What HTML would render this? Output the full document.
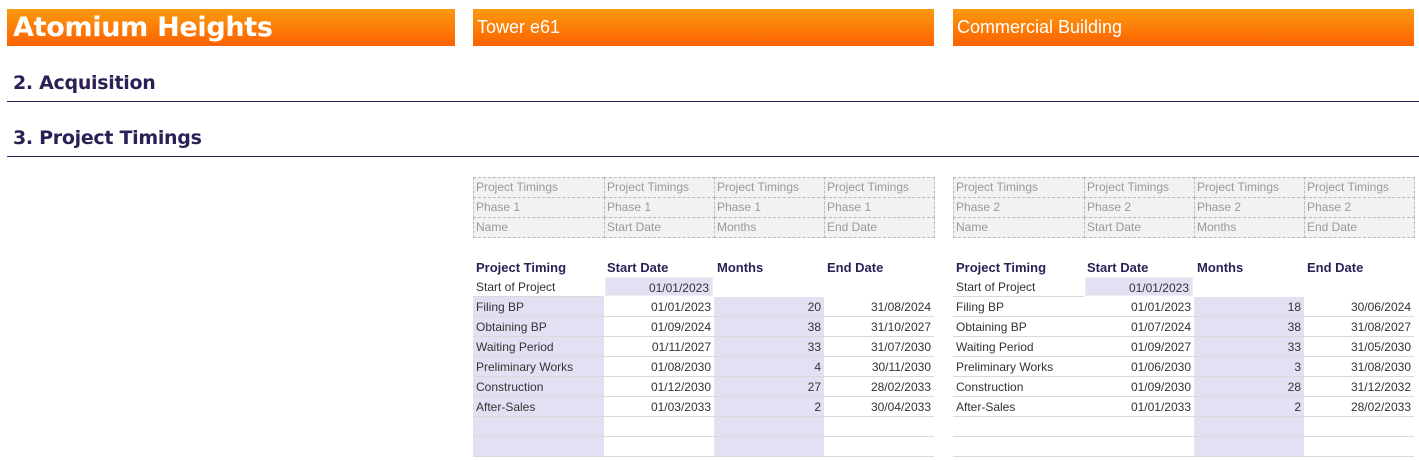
<!DOCTYPE html>
<html><head><meta charset="utf-8"><style>
*{margin:0;padding:0;box-sizing:border-box}
body{width:1419px;height:461px;background:#fff;font-family:"Liberation Sans",Tahoma,sans-serif;position:relative;overflow:hidden;color:#333}
.ban{position:absolute;top:9px;height:37px;background:linear-gradient(#fb9a10,#fd6100);color:#fff;white-space:nowrap}
.h{position:absolute;left:13px;font-weight:bold;font-size:19px;color:#2b1f55;font-family:"DejaVu Sans",sans-serif;letter-spacing:-0.3px}
.line{position:absolute;left:7px;right:0;height:1px;background:#2b1f55}
.c{position:absolute;height:20px;line-height:20px;padding:0 3px;font-size:12px;white-space:nowrap;overflow:hidden}
.g{background:#f2f2f2;color:#999;border:1px dashed #bbb}
.hd{font-weight:bold;color:#2b1f55;font-size:13px}
.r{text-align:right}
.p{background:#e4e0f4}
.b{border-bottom:1px solid #d9d9d9}
</style></head><body>
<div class="ban" style="left:7px;width:448px;font-size:27px;font-weight:bold;line-height:37px;padding-left:6px;font-family:'DejaVu Sans',sans-serif;letter-spacing:-0.3px">Atomium Heights</div>
<div class="ban" style="left:473px;width:461px;font-size:18px;line-height:37px;padding-left:4px">Tower e61</div>
<div class="ban" style="left:953px;width:461px;font-size:18px;line-height:37px;padding-left:4px">Commercial Building</div>
<div class="h" style="top:72px">2. Acquisition</div><div class="line" style="top:101px"></div>
<div class="h" style="top:127px">3. Project Timings</div><div class="line" style="top:156px"></div>
<div id="tables"></div>
<script>
function T(x0,ph,rows,namePurple){
 var xs=[0,131,241,351],ws=[131,110,110,110],h='';
 var g=[['Project Timings','Project Timings','Project Timings','Project Timings'],['Phase '+ph,'Phase '+ph,'Phase '+ph,'Phase '+ph],['Name','Start Date','Months','End Date']];
 for(var r=0;r<3;r++)for(var c=0;c<4;c++)h+='<div class="c g" style="left:'+(x0+xs[c])+'px;top:'+(177+r*20)+'px;width:'+(ws[c]+1)+'px;height:21px;line-height:19px;padding-left:2px">'+g[r][c]+'</div>';
 var hd=['Project Timing','Start Date','Months','End Date'];
 for(c=0;c<4;c++)h+='<div class="c hd" style="left:'+(x0+xs[c])+'px;top:258px;width:'+ws[c]+'px">'+hd[c]+'</div>';
 h+='<div class="c b" style="left:'+x0+'px;top:277px;width:131px">Start of Project</div>';
 h+='<div class="c p r" style="left:'+(x0+132)+'px;top:277px;width:108px;height:19px;border:1px solid #eee">01/01/2023</div>';
 for(var i=0;i<8;i++){var y=297+i*20,d=rows[i]||['','','',''];
  h+='<div class="c b'+(namePurple?' p':'')+'" style="left:'+x0+'px;top:'+y+'px;width:131px">'+d[0]+'</div>';
  h+='<div class="c b r" style="left:'+(x0+131)+'px;top:'+y+'px;width:110px">'+d[1]+'</div>';
  h+='<div class="c b p r" style="left:'+(x0+241)+'px;top:'+y+'px;width:110px">'+d[2]+'</div>';
  h+='<div class="c b r" style="left:'+(x0+351)+'px;top:'+y+'px;width:110px">'+d[3]+'</div>';}
 return h;}
var A=[['Filing BP','01/01/2023','20','31/08/2024'],['Obtaining BP','01/09/2024','38','31/10/2027'],['Waiting Period','01/11/2027','33','31/07/2030'],['Preliminary Works','01/08/2030','4','30/11/2030'],['Construction','01/12/2030','27','28/02/2033'],['After-Sales','01/03/2033','2','30/04/2033']];
var B=[['Filing BP','01/01/2023','18','30/06/2024'],['Obtaining BP','01/07/2024','38','31/08/2027'],['Waiting Period','01/09/2027','33','31/05/2030'],['Preliminary Works','01/06/2030','3','31/08/2030'],['Construction','01/09/2030','28','31/12/2032'],['After-Sales','01/01/2033','2','28/02/2033']];
document.getElementById('tables').innerHTML=T(473,1,A,true)+T(953,2,B,false);
</script>
</body></html>
